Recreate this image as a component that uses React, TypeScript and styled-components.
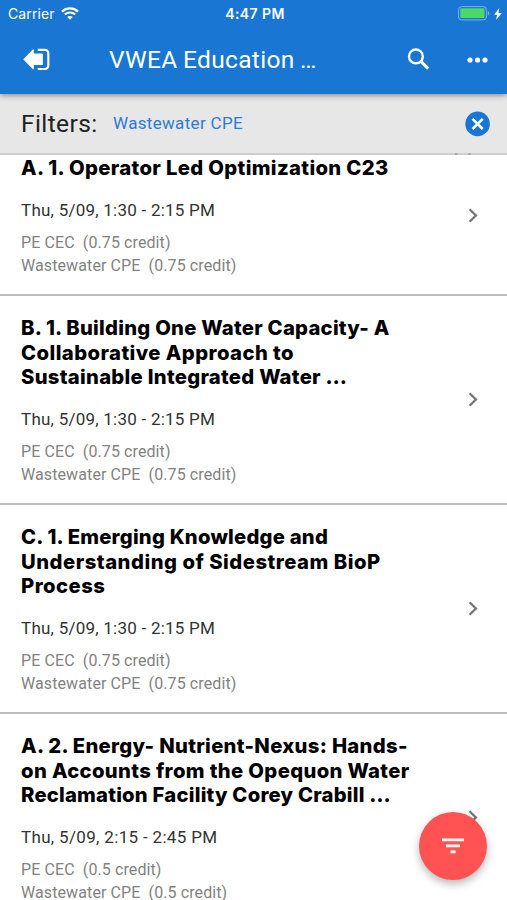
import React from "react";
import styled, { createGlobalStyle } from "styled-components";

const GlobalStyle = createGlobalStyle`
  * { box-sizing: border-box; }
  html, body { margin: 0; padding: 0; background: #fff; }
  body { font-family: Roboto, "Liberation Sans", sans-serif; overflow: hidden; }
`;

const Screen = styled.div`
  width: 507px;
  height: 900px;
  position: relative;
  display: flex;
  flex-direction: column;
  overflow: hidden;
  background: #fff;
`;

const Top = styled.header`
  flex: none;
  height: 94px;
  background: #1976d2;
  color: #fff;
  box-shadow: 0 1px 6px rgba(0, 0, 0, 0.45);
  z-index: 2;
`;

const StatusBar = styled.div`
  height: 27px;
  display: grid;
  grid-template-columns: 1fr auto 1fr;
  align-items: center;
  padding: 0 5px 0 8px;
`;

const StatusGroup = styled.div<{ $end?: boolean }>`
  display: flex;
  align-items: center;
  justify-content: ${(p) => (p.$end ? "flex-end" : "flex-start")};
  gap: ${(p) => (p.$end ? "4px" : "6px")};
`;

const StatusText = styled.span<{ $bold?: boolean; $spacing: number }>`
  font-family: Inter, sans-serif;
  font-size: 14px;
  line-height: 27px;
  font-weight: ${(p) => (p.$bold ? 600 : 400)};
  letter-spacing: ${(p) => p.$spacing}px;
  white-space: pre;
`;

const Toolbar = styled.div`
  height: 65px;
  display: flex;
  align-items: center;
  padding: 0 19px 0 22px;
`;

const IconButton = styled.button`
  display: flex;
  flex: none;
  border: 0;
  padding: 0;
  background: none;
  color: inherit;
`;

const PageTitle = styled.h1`
  flex: 1;
  margin: 0 0 0 58px;
  font-size: 24.5px;
  line-height: 30px;
  font-weight: 400;
  letter-spacing: 0.33px;
  word-spacing: -1px;
  white-space: nowrap;
`;

const Actions = styled.div`
  display: flex;
  align-items: center;
  gap: 37px;
`;

const FilterBar = styled.section`
  flex: none;
  height: 61px;
  position: relative;
  display: flex;
  align-items: center;
  padding: 0 15px 0 21px;
  background: #e7e7e7;
  border-bottom: 2px solid #cdcdcd;
`;

const FilterLabel = styled.span`
  width: 92px;
  color: #212121;
  font-size: 24.5px;
  line-height: 30px;
  letter-spacing: 0.4px;
`;

const FilterValue = styled.span`
  flex: 1;
  color: #2b7cd3;
  font-size: 17px;
  line-height: 24px;
  margin-top: -1px;
  letter-spacing: 0.32px;
`;

const ClippedMarker = styled.svg`
  position: absolute;
  right: 36px;
  bottom: -2px;
`;

const Sessions = styled.main`
  flex: 1;
  min-height: 0;
  overflow: hidden;
`;

const SessionList = styled.ul`
  list-style: none;
  margin: -19px 0 0;
  padding: 0;
`;

const SessionRow = styled.li`
  display: flex;
  align-items: center;
  padding: 20px 22px 18.5px 21px;
  border-bottom: 2px solid #bdbdbd;
  height: 209px;

  &:first-child {
    height: 160px;
  }
`;

const Details = styled.div`
  flex: 1;
  align-self: flex-start;
`;

const SessionTitle = styled.h2`
  margin: 0 0 17px;
  color: #000;
  font-family: Inter, sans-serif;
  font-weight: 800;
  font-size: 20.25px;
  line-height: 24.5px;
`;

const TitleLine = styled.span<{ $spacing: number }>`
  display: block;
  white-space: nowrap;
  letter-spacing: ${(p) => p.$spacing}px;
`;

const SessionTime = styled.p<{ $spacing: number }>`
  margin: 0 0 9px;
  color: #333;
  font-size: 17px;
  line-height: 24px;
  letter-spacing: ${(p) => p.$spacing}px;
`;

const Credit = styled.p`
  margin: 0;
  color: #828282;
  font-size: 16px;
  line-height: 23px;
  letter-spacing: 0.1px;
  white-space: pre;
`;

const Fab = styled.button`
  position: absolute;
  left: 419px;
  top: 812px;
  width: 68px;
  height: 68px;
  padding: 0;
  border: 0;
  border-radius: 50%;
  display: flex;
  align-items: center;
  justify-content: center;
  background: #ff5252;
  box-shadow: 0 4px 9px rgba(0, 0, 0, 0.28);
`;

type Line = [text: string, spacing: number];

interface Session {
  title: Line[];
  time: Line;
  credit: string;
}

const sessions: Session[] = [
  {
    title: [["A. 1. Operator Led Optimization C23", 0.35]],
    time: ["Thu, 5/09, 1:30 - 2:15 PM", 0.24],
    credit: "0.75",
  },
  {
    title: [
      ["B. 1. Building One Water Capacity- A", 0.25],
      ["Collaborative Approach to", 0.44],
      ["Sustainable Integrated Water …", 0.28],
    ],
    time: ["Thu, 5/09, 1:30 - 2:15 PM", 0.24],
    credit: "0.75",
  },
  {
    title: [
      ["C. 1. Emerging Knowledge and", 0.21],
      ["Understanding of Sidestream BioP", 0.51],
      ["Process", 0.45],
    ],
    time: ["Thu, 5/09, 1:30 - 2:15 PM", 0.24],
    credit: "0.75",
  },
  {
    title: [
      ["A. 2. Energy- Nutrient-Nexus: Hands-", 0.31],
      ["on Accounts from the Opequon Water", 0.35],
      ["Reclamation Facility Corey Crabill …", 0.21],
    ],
    time: ["Thu, 5/09, 2:15 - 2:45 PM", 0.33],
    credit: "0.5",
  },
];

const WifiIcon = () => (
  <svg width="18" height="13" viewBox="0 0 18 13" fill="none" stroke="#fff">
    <path d="M1 4.6C5.5.4 12.5.4 17 4.6" strokeWidth="2.3" />
    <path d="M3.8 7.6c3-2.8 7.4-2.8 10.4 0" strokeWidth="2.1" />
    <path d="M6.2 10C7.8 8.5 10.2 8.5 11.8 10L9 12.8z" fill="#fff" stroke="none" />
  </svg>
);

const BatteryIcon = () => (
  <svg width="32" height="15" viewBox="0 0 32 15">
    <rect x=".6" y=".6" width="27.8" height="13.3" rx="3" fill="none" stroke="#7eb3e8" strokeWidth="1" />
    <rect x="2.3" y="2.3" width="24.2" height="9.8" rx="1.2" fill="#4cd964" />
    <path d="M29.8 5v4.8c1.9-.7 1.9-4.1 0-4.8z" fill="#7eb3e8" />
  </svg>
);

const BoltIcon = () => (
  <svg width="8" height="12" viewBox="0 0 8 12" fill="#fff">
    <path d="M5.2 0 .2 6.8h2.9L2.1 12 7.8 4.9H4.5z" />
  </svg>
);

const ExitIcon = () => (
  <svg width="29" height="24" viewBox="0 0 29 24" fill="none">
    <path d="M2 11.3 11.2 1.9v4.3h9v10.2h-9v4.3z" fill="#fff" stroke="#fff" strokeWidth="1.2" strokeLinejoin="round" />
    <path d="M15.8 1.8H23a3.3 3.3 0 0 1 3.3 3.3v12.6a3.3 3.3 0 0 1-3.3 3.3h-7.2" stroke="#fff" strokeWidth="2.2" />
  </svg>
);

const SearchIcon = () => (
  <svg width="23" height="23" viewBox="0 0 23 23" fill="none" stroke="#fff">
    <circle cx="8.9" cy="8.4" r="6.9" strokeWidth="2.4" />
    <path d="m14 13.5 7.2 7.2" strokeWidth="3.1" />
  </svg>
);

const MoreIcon = () => (
  <svg width="21" height="6" viewBox="0 0 21 6" fill="#fff">
    <circle cx="3" cy="3" r="2.6" />
    <circle cx="10.5" cy="3" r="2.6" />
    <circle cx="18" cy="3" r="2.6" />
  </svg>
);

const ClearIcon = () => (
  <svg width="27" height="26" viewBox="0 0 27 26">
    <circle cx="12.6" cy="12.9" r="12.3" fill="#1976d2" />
    <path d="m7.5 7.8 10.2 10.2M17.7 7.8 7.5 18" stroke="#fff" strokeWidth="2.5" />
  </svg>
);

const Chevron = () => (
  <svg width="24" height="24" viewBox="0 0 24 24" fill="none">
    <path d="m8.6 5.2 6.3 6.3-6.3 6.3" stroke="#757575" strokeWidth="2.3" />
  </svg>
);

const FilterIcon = () => (
  <svg width="24" height="18" viewBox="0 0 24 18" fill="#fff">
    <path d="M1 1.5h22v2.7H1zM5 7.6h14v2.7H5zM9.5 13.6h5v2.7h-5z" />
  </svg>
);

export default function App() {
  return (
    <>
      <GlobalStyle />
      <Screen>
        <Top>
          <StatusBar>
            <StatusGroup>
              <StatusText $spacing={0.1}>Carrier</StatusText>
              <WifiIcon />
            </StatusGroup>
            <StatusText $bold $spacing={0.4}>4:47 PM</StatusText>
            <StatusGroup $end>
              <BatteryIcon />
              <BoltIcon />
            </StatusGroup>
          </StatusBar>
          <Toolbar>
            <IconButton aria-label="Exit"><ExitIcon /></IconButton>
            <PageTitle>VWEA Education …</PageTitle>
            <Actions>
              <IconButton aria-label="Search"><SearchIcon /></IconButton>
              <IconButton aria-label="More"><MoreIcon /></IconButton>
            </Actions>
          </Toolbar>
        </Top>
        <FilterBar>
          <FilterLabel>Filters:</FilterLabel>
          <FilterValue>Wastewater CPE</FilterValue>
          <IconButton aria-label="Clear filter"><ClearIcon /></IconButton>
          <ClippedMarker width="17" height="2" viewBox="0 0 17 2">
            <path d="M1 .4h2.6v1.2H1zM14.2.4h2.6v1.2h-2.6z" fill="#8a8a8a" />
          </ClippedMarker>
        </FilterBar>
        <Sessions>
          <SessionList>
            {sessions.map((s) => (
              <SessionRow key={s.title[0][0]}>
                <Details>
                  <SessionTitle>
                    {s.title.map(([text, spacing]) => (
                      <TitleLine key={text} $spacing={spacing}>{text}</TitleLine>
                    ))}
                  </SessionTitle>
                  <SessionTime $spacing={s.time[1]}>{s.time[0]}</SessionTime>
                  <Credit>{`PE CEC  (${s.credit} credit)`}</Credit>
                  <Credit>{`Wastewater CPE  (${s.credit} credit)`}</Credit>
                </Details>
                <Chevron />
              </SessionRow>
            ))}
          </SessionList>
        </Sessions>
        <Fab aria-label="Filter sessions"><FilterIcon /></Fab>
      </Screen>
    </>
  );
}
